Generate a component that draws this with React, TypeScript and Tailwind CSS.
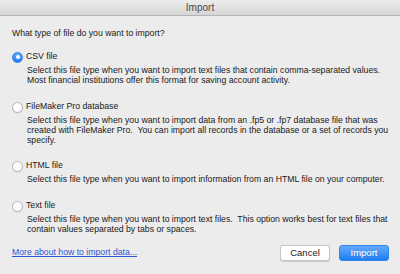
import React from "react";

function Radio({ checked }: { checked?: boolean }) {
  if (checked) {
    return (
      <div className="w-[11px] h-[11px] rounded-full bg-gradient-to-b from-[#5fa8fb] to-[#1c7cf4] border border-[#2a7de8] flex items-center justify-center shrink-0">
        <div className="w-[4px] h-[4px] rounded-full bg-white" />
      </div>
    );
  }
  return (
    <div className="w-[11px] h-[11px] rounded-full bg-white border border-[#b4b4b4] shadow-[0_0.5px_0.5px_rgba(0,0,0,0.1)] shrink-0" />
  );
}

function Option({
  label,
  lines,
  checked,
  className,
}: {
  label: string;
  lines: string[];
  checked?: boolean;
  className?: string;
}) {
  return (
    <div className={"flex flex-col " + (className ?? "")}>
      <div className="flex items-center h-[12px]">
        <div className="ml-[12px] mr-[3px]">
          <Radio checked={checked} />
        </div>
        <span className="text-[#1a1a1a]">{label}</span>
      </div>
      <div className="ml-[27px] mt-[2px] leading-[10px] text-[#1a1a1a]">
        {lines.map((l, i) => (
          <div key={i} className="whitespace-pre">
            {l}
          </div>
        ))}
      </div>
    </div>
  );
}

export default function App() {
  return (
    <div
      className="w-[400px] h-[274px] bg-[#ececec] flex flex-col overflow-hidden text-[8.7px]"
      style={{ fontFamily: '"Liberation Sans", Arial, sans-serif' }}
    >
      <div className="h-[16px] shrink-0 bg-gradient-to-b from-[#ececec] to-[#d6d6d6] border-b border-[#b3b3b3] flex items-center justify-center">
        <span className="text-[#4a4a4a] text-[10px] leading-none">Import</span>
      </div>
      <div className="mt-[12px] ml-[12px] h-[12px] flex items-center text-[#1a1a1a]">
        What type of file do you want to import?
      </div>
      <Option
        className="mt-[11px]"
        checked
        label="CSV file"
        lines={[
          "Select this file type when you want to import text files that contain comma-separated values.",
          "Most financial institutions offer this format for saving account activity.",
        ]}
      />
      <Option
        className="mt-[16px]"
        label="FileMaker Pro database"
        lines={[
          "Select this file type when you want to import data from an .fp5 or .fp7 database file that was",
          "created with FileMaker Pro.  You can import all records in the database or a set of records you",
          "specify.",
        ]}
      />
      <Option
        className="mt-[15px]"
        label="HTML file"
        lines={[
          "Select this file type when you want to import information from an HTML file on your computer.",
        ]}
      />
      <Option
        className="mt-[16px]"
        label="Text file"
        lines={[
          "Select this file type when you want to import text files.  This option works best for text files that",
          "contain values separated by tabs or spaces.",
        ]}
      />
      <div className="mt-auto mb-[13px] flex items-center justify-between pl-[12px] pr-[11px]">
        <span className="text-[#2f57d4] underline">More about how to import data...</span>
        <div className="flex gap-[9px]">
          <button className="w-[50px] h-[16px] rounded-[3px] bg-white border border-[#c5c5c5] shadow-[0_0.5px_1px_rgba(0,0,0,0.15)] text-[#1a1a1a] text-[9.5px] leading-none">
            Cancel
          </button>
          <button className="w-[50px] h-[16px] rounded-[3px] bg-gradient-to-b from-[#62aaf9] to-[#1a7cf3] border border-[#2f83ec] text-white text-[9.5px] leading-none">
            Import
          </button>
        </div>
      </div>
    </div>
  );
}
